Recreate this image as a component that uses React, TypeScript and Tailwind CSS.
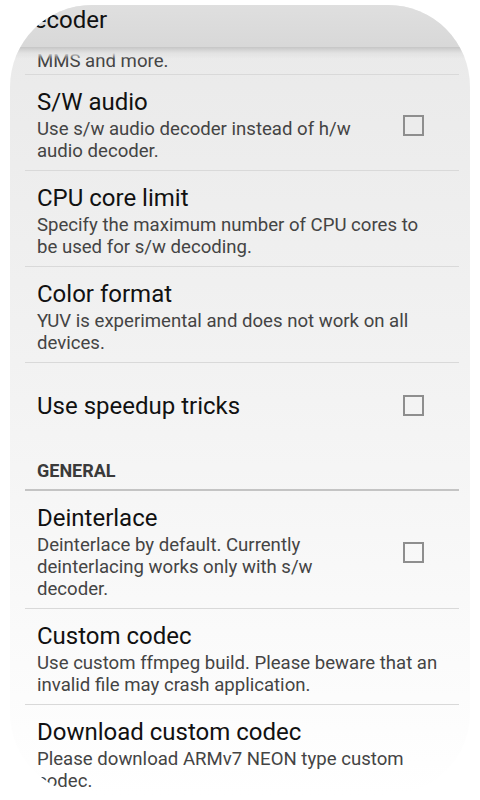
import React from "react";

type Pref = {
  title: string;
  summary?: string[];
  checkbox?: boolean;
};

// summary lines are split the way the device wrapped them
const DECODER_PREFS: Pref[] = [
  { title: "S/W audio", summary: ["Use s/w audio decoder instead of h/w", "audio decoder."], checkbox: true },
  { title: "CPU core limit", summary: ["Specify the maximum number of CPU cores to", "be used for s/w decoding."] },
  { title: "Color format", summary: ["YUV is experimental and does not work on all", "devices."] },
  { title: "Use speedup tricks", checkbox: true },
];

const GENERAL_PREFS: Pref[] = [
  {
    title: "Deinterlace",
    summary: ["Deinterlace by default. Currently", "deinterlacing works only with s/w", "decoder."],
    checkbox: true,
  },
  { title: "Custom codec", summary: ["Use custom ffmpeg build. Please beware that an", "invalid file may crash application."] },
  { title: "Download custom codec", summary: ["Please download ARMv7 NEON type custom", "codec."] },
];

function Divider({ thick = false }: { thick?: boolean }) {
  return (
    <div className={thick ? "ml-[15px] mr-[11px] h-[2px] bg-[#c4c4c4]" : "ml-[15px] mr-[11px] h-px bg-[#d9d9d9]"} />
  );
}

function CheckBox() {
  return <div className="ml-[20px] mr-[46px] h-[21px] w-[21px] shrink-0 border-2 border-[#8e8e8e]" />;
}

function PrefRow({ pref }: { pref: Pref }) {
  if (!pref.summary) {
    return (
      <div className="flex h-[85px] items-center pl-[27px]">
        <div className="flex-1 text-[24px] leading-[28px] text-[#111]">{pref.title}</div>
        {pref.checkbox && <CheckBox />}
      </div>
    );
  }

  return (
    <div className="flex items-center pb-[8px] pl-[27px] pt-[13px]">
      <div className="min-w-0 flex-1">
        <div className="text-[24px] leading-[28px] text-[#111]">{pref.title}</div>
        <div className="mt-[2px] whitespace-nowrap text-[18.6px] leading-[22px] text-[#444]">
          {pref.summary.map((line) => (
            <div key={line}>{line}</div>
          ))}
        </div>
      </div>
      {pref.checkbox && <CheckBox />}
    </div>
  );
}

export default function App() {
  return (
    <div className="h-[800px] w-[480px] overflow-hidden bg-white pt-[5px] font-['Roboto',sans-serif]">
      <div className="mx-[10px] h-[790px] overflow-hidden rounded-[82px] bg-gradient-to-b from-[#e9e9e9] via-[#f3f3f3] to-white">
        <div className="h-[42px] bg-gradient-to-b from-[#dfdfdf] to-[#d8d8d8] pl-[8px] pt-px text-[24px] leading-[28px] text-[#111]">
          Decoder
        </div>

        <div className="relative">
          <div className="absolute inset-x-0 top-0 h-[12px] bg-gradient-to-b from-[#c6c6c6] via-[#e2e2e2] to-transparent" />

          <div className="pb-[2px] pl-[27px] pt-[3px] text-[18.6px] leading-[22px] text-[#444]">MMS and more.</div>
          <Divider />

          {DECODER_PREFS.map((pref, i) => (
            <React.Fragment key={pref.title}>
              <PrefRow pref={pref} />
              {i < DECODER_PREFS.length - 1 && <Divider />}
            </React.Fragment>
          ))}

          <div className="pb-[7px] pl-[27px] pt-[12px] text-[18px] font-bold leading-[22px] text-[#3a3a3a]">GENERAL</div>
          <Divider thick />

          {GENERAL_PREFS.map((pref, i) => (
            <React.Fragment key={pref.title}>
              <PrefRow pref={pref} />
              {i < GENERAL_PREFS.length - 1 && <Divider />}
            </React.Fragment>
          ))}
        </div>
      </div>
    </div>
  );
}
